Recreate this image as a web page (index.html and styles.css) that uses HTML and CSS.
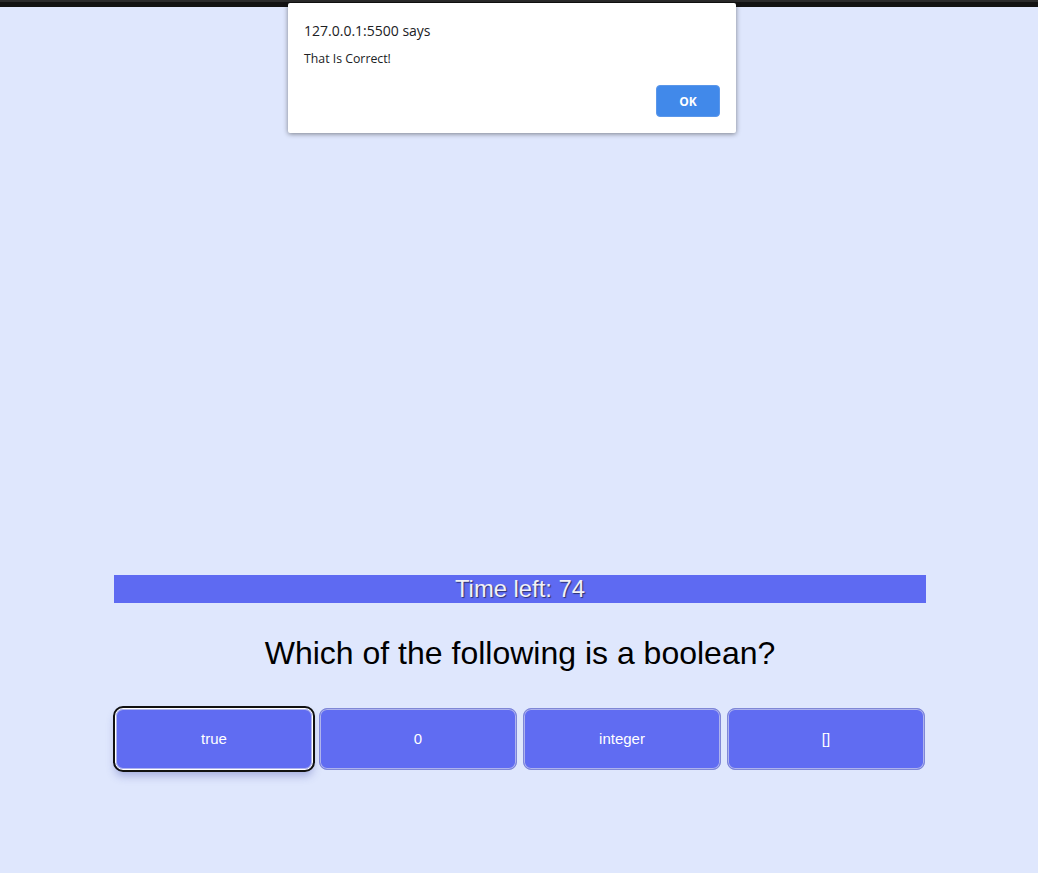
FILE: index.html
```html
<!DOCTYPE html>
<html lang="en">
<head>
<meta charset="utf-8">
<title>Quiz</title>
<link rel="stylesheet" href="styles.css">
</head>
<body>
<div class="topstrip"></div>
<main class="quiz">
  <div class="timer">Time left: 74</div>
  <h2 class="question">Which of the following is a boolean?</h2>
  <div class="answers">
    <button class="answer focused">true</button>
    <button class="answer">0</button>
    <button class="answer">integer</button>
    <button class="answer">[]</button>
  </div>
</main>
<div class="dialog">
  <div class="dialog-title">127.0.0.1:5500 says</div>
  <div class="dialog-msg">That Is Correct!</div>
  <div class="dialog-actions">
    <button class="ok">OK</button>
  </div>
</div>
</body>
</html>
```
FILE: styles.css
```css
html, body {
  margin: 0;
  padding: 0;
}
body {
  background: #dfe7fd;
  font-family: "Liberation Sans", Arial, sans-serif;
  width: 1038px;
  height: 873px;
  overflow: hidden;
  position: relative;
}
.topstrip {
  height: 7px;
  background: #131313;
  border-top: 2px solid #2c2c2c;
  box-sizing: border-box;
}
.quiz {
  width: 812px;
  margin: 0 auto;
  padding-top: 568px;
  position: relative;
  left: 1px;
}
.timer {
  height: 28px;
  line-height: 27px;
  background: #5e6af2;
  color: #f1f1f6;
  text-align: center;
  font-size: 23.8px;
  text-shadow: 1px 1px 1px rgba(0, 0, 0, 0.55);
}
.question {
  margin: 32px 0 0;
  font-weight: normal;
  font-size: 32px;
  line-height: 37px;
  text-align: center;
  color: #000;
}
.answers {
  display: grid;
  grid-template-columns: repeat(4, 1fr);
  gap: 6px;
  padding: 0 1px;
  margin-top: 36px;
}
.answer {
  height: 62px;
  background: #606cf2;
  color: #fff;
  font-family: "Liberation Sans", Arial, sans-serif;
  font-size: 15px;
  border: 1px solid #7f87d6;
  box-shadow: inset 0 0 0 1px #aeb3ee;
  border-radius: 8px;
  padding: 0 0 2px;
}
.answer.focused {
  border-color: #ffffff;
  outline: 2px solid #111;
  outline-offset: 0;
  box-shadow: inset 0 0 0 1px #aeb3ee, 0 6px 8px rgba(60, 70, 170, 0.35);
}
.dialog {
  position: absolute;
  left: 288px;
  top: 3px;
  width: 448px;
  height: 130px;
  background: #fff;
  border-radius: 2px;
  box-shadow: 0 1px 5px rgba(0, 0, 0, 0.45);
  box-sizing: border-box;
  padding: 19px 16px 0 16px;
  font-family: "Open Sans", "Noto Sans", sans-serif;
  color: #202124;
}
.dialog-title {
  font-size: 14px;
  line-height: 18px;
}
.dialog-msg {
  font-size: 12.3px;
  line-height: 16px;
  margin-top: 11px;
}
.dialog-actions {
  display: flex;
  justify-content: flex-end;
  margin-top: 18px;
}
.ok {
  width: 64px;
  height: 32px;
  background: #4189ea;
  color: #fff;
  border: 1px solid #5b97ea;
  border-radius: 4px;
  font-family: "Open Sans", "Noto Sans", sans-serif;
  font-weight: bold;
  font-size: 12px;
  padding: 0;
}
```
